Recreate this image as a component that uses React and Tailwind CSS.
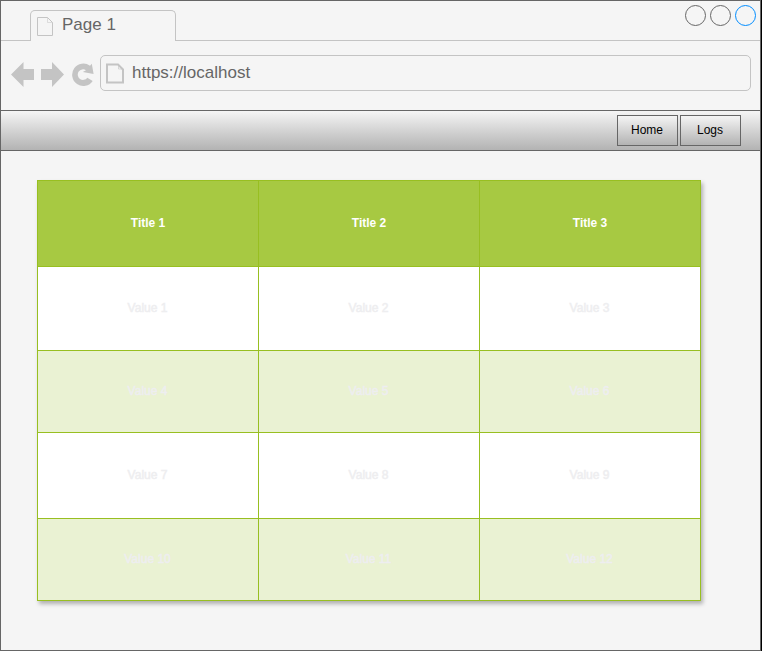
const rows = [
  { cells: ['Value 1', 'Value 2', 'Value 3'], style: 'h-[84px] bg-white' },
  { cells: ['Value 4', 'Value 5', 'Value 6'], style: 'h-[82px] bg-[#eaf2d3]' },
  { cells: ['Value 7', 'Value 8', 'Value 9'], style: 'h-[86px] bg-white' },
  { cells: ['Value 10', 'Value 11', 'Value 12'], style: 'h-[82px] bg-[#eaf2d3]' },
];

function TabPageIcon() {
  return (
    <svg width="16" height="20" viewBox="0 0 16 20" fill="none" stroke="#c4c4c4">
      <path d="M.5 .5H10.5L15.5 5.5V18.5H.5Z" />
      <path d="M10.5 .5V5.5H15.5" strokeOpacity=".5" />
    </svg>
  );
}

function UrlPageIcon() {
  return (
    <svg width="18" height="21" viewBox="0 0 18 21" fill="none" stroke="#c4c4c4">
      <path d="M1 1.5H12L17 6.5V19.5H1Z" strokeWidth="2" />
      <path d="M12.5 1.5V6H17" strokeOpacity=".6" />
    </svg>
  );
}

function NavIcons() {
  return (
    <svg width="84" height="26" viewBox="11 61 84 26" fill="#c4c4c4">
      <path d="M11 74.5L23.5 62V69H34V80H23.5V87Z" />
      <path d="M64 74.5L52 62V69H41V80H52V87Z" />
      <path d="M92.7 81A11.2 11.2 0 1 1 90 65.8L91.8 63.8L93.6 74L82.8 72L86 70.2A5.3 5.3 0 1 0 87.3 77.8Z" />
    </svg>
  );
}

function WindowControl({ color }) {
  return (
    <svg width="21" height="21" viewBox="0 0 21 21" fill="none" stroke={color}>
      <circle cx="10.5" cy="10.5" r="10" />
    </svg>
  );
}

export default function App() {
  return (
    <div className="h-[651px] w-[762px] overflow-hidden border-r border-black bg-[#f5f5f5] font-['Liberation_Sans',Arial,sans-serif]">
      <div className="flex h-full flex-col border border-[#666]">
        <header className="flex h-10 shrink-0">
          <div className="w-[29px] border-b border-[#c4c4c4]" />
          <div className="mt-[9px] flex w-[146px] rounded-t-[5px] border-x border-t border-[#c4c4c4] pl-1.5">
            <div className="pt-[6px]"><TabPageIcon /></div>
            <span className="ml-[9px] mt-[2px] text-[17px] leading-[24px] text-[#666]">Page 1</span>
          </div>
          <div className="flex grow justify-end gap-1 border-b border-[#c4c4c4] pr-1 pt-1">
            <WindowControl color="#666" />
            <WindowControl color="#666" />
            <WindowControl color="#008cff" />
          </div>
        </header>

        <div className="flex h-[69px] shrink-0 pl-2.5 pr-[9px] pt-[14px]">
          <div className="mt-[6px]"><NavIcons /></div>
          <div className="ml-[5px] flex h-9 grow rounded-[5px] border border-[#c4c4c4] pl-[5px]">
            <div className="pt-[7px]"><UrlPageIcon /></div>
            <span className="ml-2 mt-[5px] text-[17px] leading-[24px] text-[#666]">https://localhost</span>
          </div>
        </div>

        <nav className="flex h-[41px] shrink-0 justify-end gap-[2px] border-y border-[#666] bg-linear-to-b from-[#f5f5f5] to-[#b3b3b3] pr-[19px] pt-1">
          <button className="h-[31px] w-[61px] border border-[#666] bg-linear-to-b from-[#f5f5f5] to-[#b3b3b3] pr-px text-xs leading-[29px] text-black">Home</button>
          <button className="h-[31px] w-[61px] border border-[#666] bg-linear-to-b from-[#f5f5f5] to-[#b3b3b3] pr-px text-xs leading-[29px] text-black">Logs</button>
        </nav>

        <main className="pl-9 pt-[29px]">
          <div className="w-[664px] border-l border-t border-[#98bf21] text-xs shadow-[2px_3px_4px_rgba(0,0,0,0.28)]">
            <div className="grid h-[86px] grid-cols-3 bg-[#a7c942] font-bold text-white">
              {['Title 1', 'Title 2', 'Title 3'].map((title) => (
                <div key={title} className="flex items-center justify-center border-b border-r border-[#98bf21] pb-0.5">{title}</div>
              ))}
            </div>
            {rows.map((row) => (
              <div key={row.cells[0]} className={'grid grid-cols-3 text-[#eeeef0] [-webkit-text-stroke:0.5px_#eeeef0] ' + row.style}>
                {row.cells.map((cell) => (
                  <div key={cell} className="flex items-center justify-center border-b border-r border-[#98bf21] pb-0.5 pr-px">{cell}</div>
                ))}
              </div>
            ))}
          </div>
        </main>
      </div>
    </div>
  );
}
